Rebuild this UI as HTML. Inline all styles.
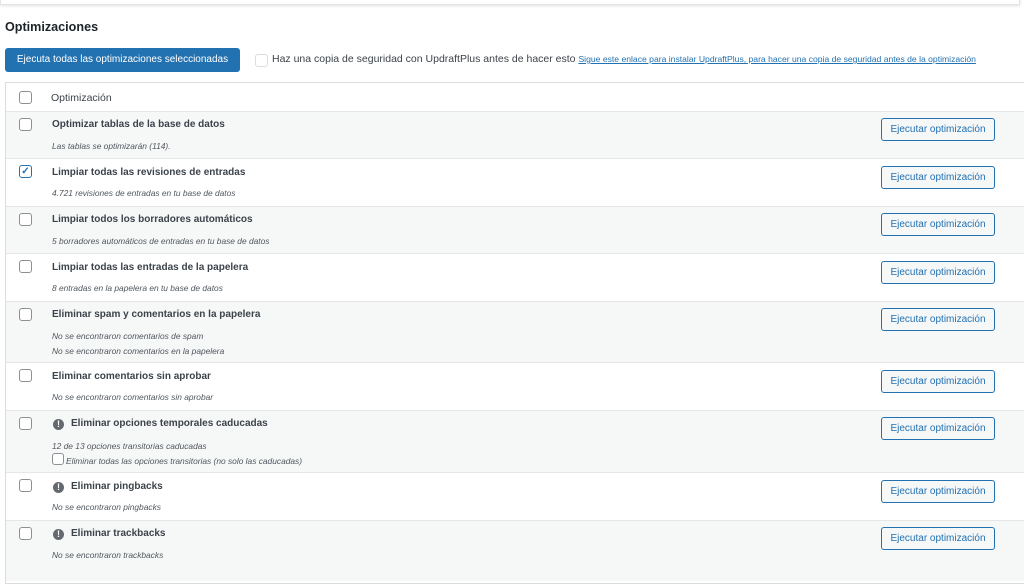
<!DOCTYPE html><html><head><style>
body{margin:0;width:1024px;height:568px;overflow:hidden;background:#fff;font-family:"Liberation Sans",sans-serif;color:#1d2327;position:relative}
.top{position:absolute;left:0;top:-4px;width:1018px;height:7px;background:#fff;box-shadow:0 1px 3px rgba(0,0,0,.12);border:1px solid #e4e4e4}
h2{position:absolute;left:5px;top:20px;margin:0;font-size:12.6px;font-weight:600;color:#1d2327}
.pb{position:absolute;left:5px;top:48px;width:235px;height:24px;background:#2271b1;color:#fff;border-radius:3px;font-size:10px;line-height:24px;text-align:center}
.cb{position:absolute;width:11px;height:11px;border:1px solid #8c8f94;border-radius:3px;background:#fff}
.bk{position:absolute;left:272px;top:53px;font-size:10.5px;color:#3c434a;white-space:nowrap}
.bk a{color:#2271b1;text-decoration:underline;font-size:8.6px}
.tbl{position:absolute;left:5px;top:82px;width:1030px;height:500px;border:1px solid #dcdcde;border-right:none}
.r{position:absolute;left:0;width:1030px;border-top:1px solid #e6e6e6}
.g{background:#f6f7f7}
.t{position:absolute;left:46px;font-size:10px;font-weight:bold;color:#3c434a}
.s{position:absolute;left:46px;font-size:8.4px;font-style:italic;color:#50575e}
.btn{position:absolute;left:875px;width:112px;height:21px;border:1px solid #2271b1;border-radius:3px;background:#f6f7f7;color:#2271b1;font-size:10px;line-height:21px;text-align:center}
.i{position:absolute;left:47px;width:11px;height:11px;border-radius:50%;background:#646970;color:#fff;font-size:9px;font-weight:bold;line-height:11px;text-align:center}
</style></head><body>
<div class="top"></div>
<h2>Optimizaciones</h2>
<div class="pb">Ejecuta todas las optimizaciones seleccionadas</div>
<div class="cb" style="left:255px;top:54px;border-color:#ddd"></div>
<div class="bk">Haz una copia de seguridad con UpdraftPlus antes de hacer esto <a>Sigue este enlace para instalar UpdraftPlus, para hacer una copia de seguridad antes de la optimización</a></div>
<div class="tbl">
<div class="cb" style="left:13px;top:8px"></div>
<div style="position:absolute;left:45px;top:9px;font-size:10.5px;color:#3c434a">Optimización</div>

<div class="r g" style="top:28px;height:47px"><div class="cb" style="left:13px;top:6px"></div><div class="t" style="top:7px">Optimizar tablas de la base de datos</div><div class="s" style="top:29px">Las tablas se optimizarán (114).</div><div class="btn" style="top:6px">Ejecutar optimización</div></div>

<div class="r" style="top:75px;height:48px"><div class="cb" style="left:13px;top:6px;border-color:#2271b1;color:#2271b1;font-size:10px;line-height:11px;text-align:center;font-weight:bold">✓</div><div class="t" style="top:8px">Limpiar todas las revisiones de entradas</div><div class="s" style="top:29px">4.721 revisiones de entradas en tu base de datos</div><div class="btn" style="top:7px">Ejecutar optimización</div></div>

<div class="r g" style="top:123px;height:47px"><div class="cb" style="left:13px;top:6px"></div><div class="t" style="top:7px">Limpiar todos los borradores automáticos</div><div class="s" style="top:29px">5 borradores automáticos de entradas en tu base de datos</div><div class="btn" style="top:6px">Ejecutar optimización</div></div>

<div class="r" style="top:170px;height:48px"><div class="cb" style="left:13px;top:6px"></div><div class="t" style="top:8px">Limpiar todas las entradas de la papelera</div><div class="s" style="top:29px">8 entradas en la papelera en tu base de datos</div><div class="btn" style="top:7px">Ejecutar optimización</div></div>

<div class="r g" style="top:218px;height:61px"><div class="cb" style="left:13px;top:6px"></div><div class="t" style="top:7px">Eliminar spam y comentarios en la papelera</div><div class="s" style="top:29px">No se encontraron comentarios de spam</div><div class="s" style="top:44px">No se encontraron comentarios en la papelera</div><div class="btn" style="top:6px">Ejecutar optimización</div></div>

<div class="r" style="top:279px;height:48px"><div class="cb" style="left:13px;top:6px"></div><div class="t" style="top:8px">Eliminar comentarios sin aprobar</div><div class="s" style="top:29px">No se encontraron comentarios sin aprobar</div><div class="btn" style="top:7px">Ejecutar optimización</div></div>

<div class="r g" style="top:327px;height:62px"><div class="cb" style="left:13px;top:6px"></div><div class="i" style="top:8px">!</div><div class="t" style="top:7px;left:65px">Eliminar opciones temporales caducadas</div><div class="s" style="top:30px">12 de 13 opciones transitorias caducadas</div><div class="cb" style="left:46px;top:42px;width:10px;height:10px"></div><div class="s" style="top:45px;left:60px">Eliminar todas las opciones transitorias (no solo las caducadas)</div><div class="btn" style="top:6px">Ejecutar optimización</div></div>

<div class="r" style="top:389px;height:48px"><div class="cb" style="left:13px;top:6px"></div><div class="i" style="top:9px">!</div><div class="t" style="top:8px;left:65px">Eliminar pingbacks</div><div class="s" style="top:29px">No se encontraron pingbacks</div><div class="btn" style="top:7px">Ejecutar optimización</div></div>

<div class="r g" style="top:437px;height:60px"><div class="cb" style="left:13px;top:6px"></div><div class="i" style="top:8px">!</div><div class="t" style="top:7px;left:65px">Eliminar trackbacks</div><div class="s" style="top:29px">No se encontraron trackbacks</div><div class="btn" style="top:6px">Ejecutar optimización</div></div>
</div>
</body></html>
